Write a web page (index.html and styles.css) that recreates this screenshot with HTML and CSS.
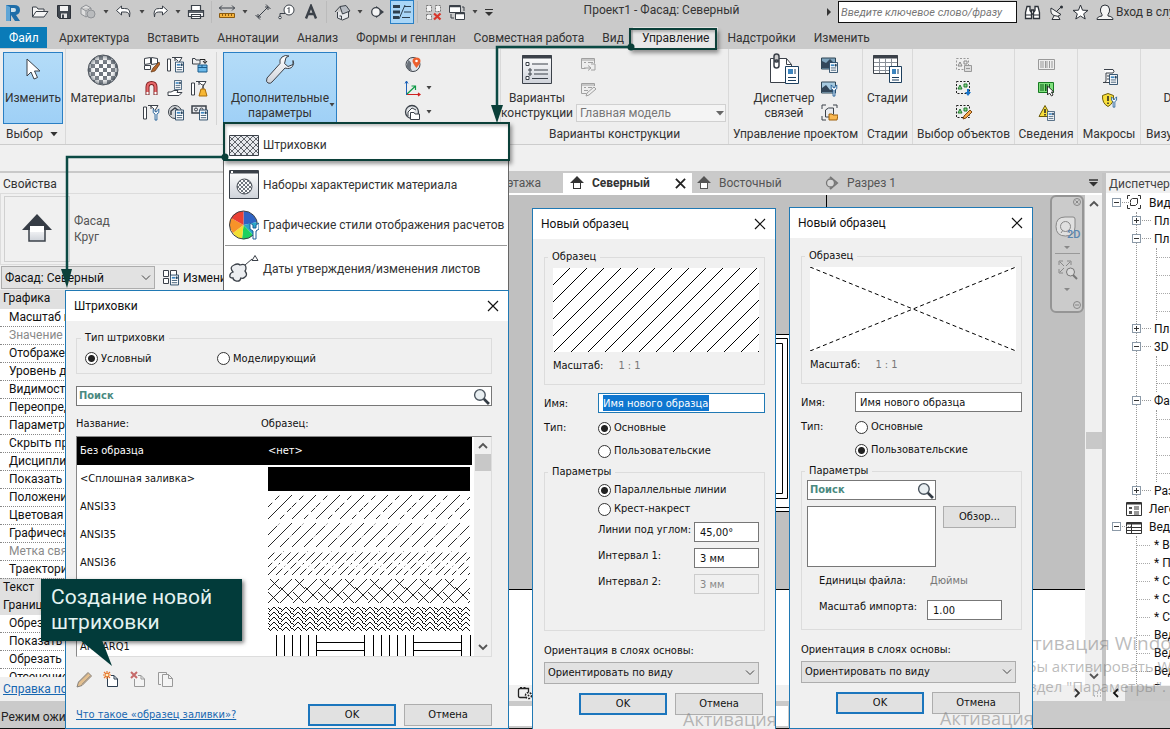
FILE: index.html
```html
<!DOCTYPE html>
<html lang="ru">
<head>
<meta charset="utf-8">
<title>Проект1 - Фасад: Северный</title>
<link rel="stylesheet" href="styles.css">
</head>
<body>
<svg class="defs" width="0" height="0" aria-hidden="true">
  <defs>
    <pattern id="checks" width="8" height="8" patternUnits="userSpaceOnUse"><rect width="8" height="8" fill="#fbfbfb"/><rect width="4" height="4" fill="#70767e"/><rect x="4" y="4" width="4" height="4" fill="#70767e"/></pattern>
    <pattern id="checks-s" width="4" height="4" patternUnits="userSpaceOnUse"><rect width="4" height="4" fill="#fbfbfb"/><rect width="2" height="2" fill="#70767e"/><rect x="2" y="2" width="2" height="2" fill="#70767e"/></pattern>
    <radialGradient id="ball"><stop offset=".5" stop-color="#fff" stop-opacity="0"/><stop offset="1" stop-color="#23303c" stop-opacity=".55"/></radialGradient>
    <linearGradient id="paper" x1="0" y1="0" x2="0" y2="1"><stop offset="0" stop-color="#fff"/><stop offset="1" stop-color="#cfd3da"/></linearGradient>
    <pattern id="mesh" width="6" height="6" patternUnits="userSpaceOnUse"><path d="M0 0l6 6M6 0L0 6" stroke="#3d4148" stroke-width=".8"/></pattern>
    <pattern id="diag" width="17" height="17" patternUnits="userSpaceOnUse"><path d="M-1 18L18-1" stroke="#000"/></pattern>
    <pattern id="h33" width="24" height="24" patternUnits="userSpaceOnUse"><path d="M0 24L24 0" stroke="#111" stroke-width=".9"/><path d="M12 24L24 12M0 12L12 0" stroke="#111" stroke-width=".9" stroke-dasharray="6 4"/></pattern>
    <pattern id="h35" width="24" height="24" patternUnits="userSpaceOnUse"><path d="M0 24L24 0" stroke="#111" stroke-width=".9"/><path d="M12 24L24 12M0 12L12 0" stroke="#111" stroke-width=".9" stroke-dasharray="13 2 1 2"/></pattern>
    <pattern id="h36" width="24" height="24" patternUnits="userSpaceOnUse"><path d="M0 24L24 0" stroke="#111" stroke-width=".9" stroke-dasharray="12 3 2 3"/><path d="M8 24L24 8M0 8L8 0" stroke="#111" stroke-width=".9" stroke-dasharray="9 3 1 3"/><path d="M16 24L24 16M0 16L16 0" stroke="#111" stroke-width=".9" stroke-dasharray="6 3 10 3"/></pattern>
    <pattern id="h37" width="25" height="24" patternUnits="userSpaceOnUse"><path d="M0 24L24 0M12 24L25 11M0 11L11 0M2 0L12 10M12 8L25 21M0 13L11 24" stroke="#111" stroke-width=".9" fill="none"/></pattern>
    <pattern id="herring" width="12" height="5" patternUnits="userSpaceOnUse"><path d="M0 6L6 0L12 6M0 1l3 3M9-1l3 3" stroke="#111" fill="none"/></pattern>
    <pattern id="parq" width="97" height="30" patternUnits="userSpaceOnUse"><path d="M8.500 0v30M16.500 0v30M24.500 0v30M32.500 0v30M40.500 0v30M48.500 0v30M96.500 0v30M48 7.500h49M48 15.500h49M48 23.500h49" stroke="#000" fill="none"/></pattern>
  </defs>
  <symbol id="card" viewBox="0 0 10 12"><path d="M.5.5h9v11h-9z" fill="#fff" stroke="#1d3f5e"/><path d="M2 2.500h4v2H2z" fill="#3d86c0"/><path d="M7 2.500h1v2H7zM2 6.500h6M2 9h6" stroke="#1d3f5e" stroke-width=".9"/></symbol>
  <symbol id="wrench-s" viewBox="0 0 8 14"><path d="M1 1v4l2 1.500V13h2V6.500L7 5V1L5 3v1H3V3z" fill="#fff" stroke="#1d5c96"/></symbol>
  <symbol id="home" viewBox="0 0 16 16"><path d="M8 1L1 8h3v6h8V8h3z" fill="currentColor"/><path d="M5 8h6v5H5z" fill="#fff"/></symbol>
  <symbol id="caret" viewBox="0 0 8 6"><path d="M1.500 1h5L4 4.500z" fill="#444"/></symbol>
  <symbol id="chev-d" viewBox="0 0 12 8"><path d="M2 2l4 4 4-4" fill="none" stroke="currentColor" stroke-width="1.800"/></symbol>
  <symbol id="close" viewBox="0 0 12 12"><path d="M1 1l10 10M11 1L1 11" fill="none" stroke="currentColor" stroke-width="1.200"/></symbol>
  <symbol id="lens" viewBox="0 0 16 16"><path d="M10 10l5 5" stroke="#333b44" stroke-width="2.600"/><circle cx="6.500" cy="6.500" r="5" fill="#e9eff2" stroke="#4a545e" stroke-width="1.300"/></symbol>
  <symbol id="duct" viewBox="0 0 16 16"><path d="M.5 3v12h3V3zM5 1.500h10l-3 5v2M8 2v3M11 5L7 1.500" fill="#fff" stroke="#3b4149"/></symbol>
</svg>

<div class="app">
  <header class="titlebar">
    <div class="logo"><svg width="18" height="18" viewBox="0 0 18 18"><path d="M2 1h8q6 0 6 5 0 4-4 5l4 6h-5l-4-6v6H2z" fill="#1f6da8"/><path d="M7 4h3q2 0 2 2t-2 2H7z" fill="#cfe0ea"/><path d="M2 1l4 2v14H2z" fill="#5fa5d6"/></svg></div>
    <nav class="quick" aria-label="Быстрый доступ">
      <button class="q" aria-label="Открыть"><svg width="18" height="16" viewBox="0 0 18 16"><path d="M1.500 13V3h4l1.500 2h6v2.500M1.500 13L5 7.500h12L13 13z" fill="#f4f4f4" stroke="#3b4149"/></svg></button>
      <button class="q" aria-label="Сохранить"><svg width="16" height="16" viewBox="0 0 16 16"><path d="M1.500 1.500h13v13h-11l-2-2z" fill="#40474f" stroke="#2c3138"/><path d="M4 2h8v5H4z" fill="#f3f3f3"/><path d="M5 9.500h6V14H5z" fill="#e3e3e3"/><path d="M6 10.500h2V14H6z" fill="#40474f"/></svg></button>
      <button class="q" aria-label="Синхронизировать"><svg width="18" height="18" viewBox="0 0 18 18"><path d="M2 5l5-3 5 3v6l-5 3-5-3zM2 5l5 3 5-3M7 8v6" fill="#dedede" stroke="#8f9296"/><circle cx="12" cy="11" r="4" fill="#b9bbbd" stroke="#8f9296"/></svg></button>
      <button class="dd" aria-label="Ещё"><svg width="8" height="6"><use href="#caret"/></svg></button>
      <button class="q" aria-label="Отменить"><svg width="18" height="14" viewBox="0 0 18 14"><path d="M6.500 1L1.500 5.500l5 4.500V7h4q4 0 4 5 2-9-5-8.500h-3z" fill="#fff" stroke="#3b4149"/></svg></button>
      <button class="dd" aria-label="Ещё"><svg width="8" height="6"><use href="#caret"/></svg></button>
      <button class="q" aria-label="Вернуть"><svg width="18" height="14" viewBox="0 0 18 14"><path d="M11.500 1l5 4.500-5 4.500V7h-4q-4 0-4 5-2-9 5-8.500h3z" fill="#fff" stroke="#3b4149"/></svg></button>
      <button class="dd" aria-label="Ещё"><svg width="8" height="6"><use href="#caret"/></svg></button>
      <button class="q" aria-label="Печать"><svg width="18" height="16" viewBox="0 0 18 16"><path d="M4.500 6V1.500h9V6M1.500 6.500h15v6h-15zM4.500 10.500h9v4h-9z" fill="#fff" stroke="#3b4149" stroke-width="1.200"/><path d="M2 7h14v2H2z" fill="#5d636b"/></svg></button>
      <i class="qsep"></i>
      <button class="q" aria-label="Измерить"><svg width="18" height="16" viewBox="0 0 18 16"><path d="M1 4h16M4 1.500L1.500 4 4 6.500M14 1.500L16.500 4 14 6.500" fill="none" stroke="#3b4149"/><path d="M1.500 9.500h15v4h-15z" fill="#f5b33c" stroke="#8a5a10"/><path d="M4.500 10v2M7.500 10v2M10.500 10v2M13.500 10v2" stroke="#8a5a10"/></svg></button>
      <button class="dd" aria-label="Ещё"><svg width="8" height="6"><use href="#caret"/></svg></button>
      <button class="q" aria-label="Размер"><svg width="18" height="18" viewBox="0 0 18 18"><path d="M4 14L14 4M1.500 12l4.500 4.500M12 1.500L16.500 6M4 11v3h3M11 4h3v3" fill="none" stroke="#3b4149"/></svg></button>
      <button class="q" aria-label="Марка"><svg width="18" height="16" viewBox="0 0 18 16"><path d="M2 14v-4.500h5" fill="none" stroke="#3b4149"/><circle cx="2" cy="13.500" r="1.300" fill="#fff" stroke="#3b4149"/><circle cx="11" cy="6" r="5" fill="#fff" stroke="#3b4149"/><path d="M9.500 5L11 3.500V9" fill="none" stroke="#3b4149"/></svg></button>
      <button class="q" aria-label="Текст"><svg width="14" height="16" viewBox="0 0 14 16"><path d="M2 14.500L7 2l5 12.500M4 10h6" fill="none" stroke="#3b4149" stroke-width="2.400"/></svg></button>
      <i class="qsep"></i>
      <button class="q" aria-label="3D вид"><svg width="17" height="17" viewBox="0 0 17 17"><path d="M3.500 8v6l5 2 6-2.500V7" fill="#e7e9ec" stroke="#3b4149"/><path d="M1 8l5-5.500 6-1L16 7l-7.500 3L6 2.500" fill="#b7bcc3" stroke="#3b4149"/><path d="M5.500 12h2v3" fill="none" stroke="#3b4149"/></svg></button>
      <button class="dd" aria-label="Ещё"><svg width="8" height="6"><use href="#caret"/></svg></button>
      <button class="q" aria-label="Разрез"><svg width="16" height="16" viewBox="0 0 16 16"><path d="M6 2l8 6-8 6z" fill="#3b4149"/><circle cx="6" cy="8" r="4.300" fill="#f4f4f4" stroke="#3b4149" stroke-width="1.300"/></svg></button>
      <button class="q on" aria-label="Тонкие линии"><svg width="20" height="18" viewBox="0 0 20 18"><path d="M1 3.500h7M1 9h7M1 14.500h6" stroke="#2c3e4d" stroke-width="3"/><path d="M13 2L7 16M12 3.500h7M12 9h7M10 14.500h8" stroke="#2c3e4d"/></svg></button>
      <i class="qsep"></i>
      <button class="q" aria-label="Закрыть неактивные"><svg width="17" height="17" viewBox="0 0 17 17"><path d="M1.500 1.500h5v6h-5zM10.500 1.500h5v6h-5zM1.500 10.500h5v5h-5z" fill="#f4f4f4" stroke="#777" stroke-dasharray="2 1"/><path d="M9 9.500l6.500 6M15.500 9.500L9 15.500" stroke="#d8362a" stroke-width="2.300"/></svg></button>
      <button class="q" aria-label="Переключить окна"><svg width="18" height="17" viewBox="0 0 18 17"><path d="M1.500 1.500h11v7h-11zM7.500 8.500h9v7h-9z" fill="#fff" stroke="#3b4149"/><path d="M2 2.500h10M8 9.500h8" stroke="#3b4149" stroke-width="1.500"/><path d="M3 10v4h3M16 7V3h-2" fill="none" stroke="#3b4149"/></svg></button>
      <button class="dd" aria-label="Ещё"><svg width="8" height="6"><use href="#caret"/></svg></button>
      <button class="dd wide" aria-label="Настроить"><svg width="10" height="9" viewBox="0 0 10 9"><path d="M1 1.500h8" stroke="#333"/><path d="M1 4h8L5 8z" fill="#333"/></svg></button>
    </nav>
    <h1 class="doc-title">Проект1 - Фасад: Северный</h1>
    <div class="account">
      <svg width="6" height="8" viewBox="0 0 6 8"><path d="M1 0l4 4-4 4z" fill="#333"/></svg>
      <input class="help-search" type="text" placeholder="Введите ключевое слово/фразу" aria-label="Поиск в справке">
      <svg width="17" height="16" viewBox="0 0 17 16"><path d="M3 2.500h3v4l1.500 2v6h-6v-6zM11 2.500h3l1.500 6v6h-6v-6l1.500-2zM7.500 6h2v4h-2z" fill="#fff" stroke="#2c3138" stroke-width="1.300"/><path d="M2 11h5M10 11h5" stroke="#2c3138"/></svg>
      <svg width="17" height="17" viewBox="0 0 17 17"><path d="M3 4q-1 6 3 7.500 4 2 7-1zM8 8l5-5M6 12l-2 3.500h8L10 12" fill="#f2f2f2" stroke="#2c3138"/><circle cx="13.500" cy="3" r="1.500" fill="#2c3138"/></svg>
      <svg width="17" height="16" viewBox="0 0 17 16"><path d="M8.500 1l2 5.200 5.500.2-4.300 3.400 1.500 5.200-4.700-3-4.700 3 1.500-5.200L1 6.400l5.500-.2z" fill="#fff" stroke="#2c3138"/></svg>
      <svg width="18" height="17" viewBox="0 0 18 17"><path d="M1 15.500q0-3 5-3.500v-1.500Q4 8 4.500 5q.5-4 4.500-4t4.500 4q.5 3-1.500 5.500V12q5 .5 5 3.500z" fill="#f4f4f4" stroke="#2c3138"/></svg>
      <a class="login" href="#">Вход в службы</a>
    </div>
  </header>

  <nav class="tabs" aria-label="Лента">
    <button class="tab file">Файл</button>
    <button class="tab">Архитектура</button>
    <button class="tab">Вставить</button>
    <button class="tab">Аннотации</button>
    <button class="tab">Анализ</button>
    <button class="tab">Формы и генплан</button>
    <button class="tab">Совместная работа</button>
    <button class="tab">Вид</button>
    <button class="tab current">Управление</button>
    <button class="tab">Надстройки</button>
    <button class="tab">Изменить</button>
  </nav>

  <section class="ribbon">
    <div class="panel p-select">
      <div class="panel-body"><button class="big lit"><svg width="32" height="34" viewBox="0 0 32 34"><path d="M10 6v17l4-4 3 7 3.500-1.500-3-6.500H23z" fill="#fff" stroke="#3b4149"/></svg><span>Изменить</span></button></div>
      <h2>Выбор <svg width="10" height="6" viewBox="0 0 8 5"><path d="M1 0h6L4 3.500z" fill="#333"/></svg></h2>
    </div>
    <div class="panel p-params">
      <div class="panel-body">
        <button class="big mat"><svg width="32" height="34" viewBox="0 0 32 34"><circle cx="16" cy="18" r="15" fill="url(#checks)"/><circle cx="16" cy="18" r="15" fill="url(#ball)" stroke="#565c64"/></svg><span>Материалы</span></button>
        <div class="small-grid">
          <button aria-label="Стили объектов"><svg width="17" height="17" viewBox="0 0 17 17"><path d="M1.500 2.500l6-1v6l-6 1zM8.500 1.500l6 1v5l-6 1zM1.500 9.500h6v4h-6z" fill="#fff" stroke="#3b4149"/><path d="M16 6l-6 6-2 4 4-1 5-7z" fill="#b5652a" stroke="#5c3313" stroke-width=".7"/></svg></button>
          <button aria-label="Параметры проекта"><svg width="17" height="17"><use href="#duct" width="16" height="16"/><use href="#card" x="8" y="5" width="9" height="12"/></svg></button>
          <button aria-label="Передача стандартов"><svg width="17" height="17" viewBox="0 0 17 17"><path d="M1.500 8V2.500H4l1 1.500h4V8z" fill="#eee" stroke="#3b4149"/><path d="M9 3.500h5V7M12 5l2 2.500L16 5" fill="none" stroke="#222"/><path d="M7 9h9v7H7z" fill="#6bb9ea" stroke="#1b5c8c"/><path d="M7 11.500h9M11 9v2" stroke="#1b5c8c"/></svg></button>
          <button aria-label="Привязки"><svg width="17" height="17" viewBox="0 0 17 17"><path d="M4.500 15V7q0-4 4-4t4 4v8" fill="none" stroke="#7c1d1f" stroke-width="4"/><path d="M4.500 12V7q0-4 4-4t4 4v5" fill="none" stroke="#e8686a" stroke-width="2.200"/><path d="M4.500 12v2.500M12.500 12v2.500" stroke="#fff" stroke-width="2.200"/></svg></button>
          <button aria-label="Общие параметры"><svg width="17" height="17" viewBox="0 0 17 17"><use href="#card" x="7" y="0" width="8" height="10"/><path d="M1 12h3l3-1.500h4l-1 2h5l-3 3H1z" fill="#fff" stroke="#3b4149"/></svg></button>
          <button aria-label="Удалить неиспользуемые"><svg width="17" height="17"><use href="#duct" width="16" height="16"/><path d="M12 4v5" stroke="#333"/><path d="M10 9h4l2 7H8z" fill="#f7b733" stroke="#a86c0a"/></svg></button>
          <button aria-label="Единицы проекта"><svg width="17" height="17"><use href="#duct" width="16" height="16"/><use href="#wrench-s" x="9" y="4" width="8" height="13"/></svg></button>
          <button aria-label="Электротехнические параметры"><svg width="17" height="17" viewBox="0 0 17 17"><circle cx="8" cy="8" r="6.500" fill="#d5d8db" stroke="#3b4149"/><path d="M4 11V7l4-3 4 3" fill="none" stroke="#3b4149" stroke-width="1.500"/><use href="#card" x="8" y="5" width="9" height="12"/></svg></button>
          <button aria-label="Диспетчер"><svg width="17" height="17" viewBox="0 0 17 17"><path d="M1 2h14v7H1z" fill="#e9ebee" stroke="#3b4149" stroke-width="1.500"/><circle cx="5" cy="5.500" r="1.500" fill="none" stroke="#3b4149"/><circle cx="10.500" cy="5.500" r="1.500" fill="none" stroke="#3b4149"/><use href="#card" x="8" y="5" width="9" height="12"/></svg></button>
        </div>
        <i class="rule"></i>
        <button class="big lit extra"><svg width="32" height="34" viewBox="0 0 32 34"><path d="M29 11.500l-5 2-3.500-3 1.500-6 3-1.500q-4-1.500-7 1t-2 6.500L3 25q-1.500 4 1 5t4-1l13-14q5 1.500 7.500-1.500 2-3 .5-6z" fill="url(#paper)" stroke="#3b4149"/></svg><span>Дополнительные<br>параметры</span><svg class="corner" width="8" height="6"><use href="#caret"/></svg></button>
        <div class="small-col">
          <button aria-label="Местоположение"><svg width="17" height="17" viewBox="0 0 17 17"><circle cx="8" cy="8.500" r="7" fill="#dfe3e8" stroke="#3b4149"/><path d="M3 4q4 2 3 5t1 6q-5-1-5.500-5z" fill="#6a717a"/><path d="M11.500 1.500q4 0 4 3.500 0 2-4 7-4-5-4-7 0-3.500 4-3.500z" fill="#ec5f2e"/><circle cx="11.500" cy="5" r="1.300" fill="#fff"/></svg></button><i></i>
          <button aria-label="Координаты"><svg width="18" height="17" viewBox="0 0 18 17"><path d="M2.500 15V1M1 3.500L2.500 1 4 3.500" fill="none" stroke="#1d62b8"/><path d="M3 14.500h13M14 13l2 1.500-2 1.500" fill="none" stroke="#cf2222" stroke-width="1.200"/><path d="M3 14L11 6.500M7.500 6h4v4" fill="none" stroke="#0f9a46" stroke-width="1.200"/></svg></button><svg width="8" height="6"><use href="#caret"/></svg>
          <button aria-label="Площадка"><svg width="18" height="17" viewBox="0 0 18 17"><circle cx="8" cy="8" r="6.500" fill="#e1e4e7" stroke="#3b4149" stroke-width="1.300"/><path d="M4 12V8l4-4 4 2M6.500 8.500H10l1 1.500h4.500v5.500h-9z" fill="#fff" stroke="#3b4149"/></svg></button><svg width="8" height="6"><use href="#caret"/></svg>
        </div>
      </div>
      <h2>Параметры</h2>
    </div>
    <div class="panel p-options">
      <div class="panel-body">
        <button class="big var"><svg width="32" height="34" viewBox="0 0 32 34"><path d="M1.500 3.500h29v28h-29z" fill="url(#paper)" stroke="#3b4149"/><path d="M1 5h30" stroke="#3b4149" stroke-width="3"/><path d="M5 10.500h3v3H5zM5 24.500h3v3H5zM8 17h2v2H8zM8 21h2v2H8z" fill="#fff" stroke="#3b4149"/><path d="M11 12h16M13 18h14M13 22h14M11 26.500h16" stroke="#3b4149"/></svg><span>Варианты<br>конструкции</span></button>
        <div class="options-col">
          <button disabled aria-label="Добавить в набор"><svg width="17" height="17" viewBox="0 0 17 17"><path d="M1.500 2.500h13v5M1.500 2.500v10h4M1.500 4h13M4 6.500h2M8 6.500h5M4 12h7M11 8h4v6h-4M8 9.500l3 2.500-3 2.500" fill="none" stroke="#a0a0a0"/></svg></button>
          <button disabled aria-label="Выбрать для изменения"><svg width="17" height="17" viewBox="0 0 17 17"><path d="M14.500 5V2.500h-13v10h5M1.500 4h13M4 6.500h2M8 6.500h4M4 9.500h4M6 15l1-3 7-6 2 2-7 6z" fill="none" stroke="#a0a0a0"/></svg></button>
          <select class="model" disabled aria-label="Вариант"><option>Главная модель</option></select>
        </div>
      </div>
      <h2>Варианты конструкции</h2>
    </div>
    <div class="panel p-project">
      <div class="panel-body">
        <button class="big links"><svg width="32" height="34" viewBox="0 0 32 34"><path d="M2.500 6.500h16l5 6v18h-21z" fill="#fff" stroke="#3b4149"/><path d="M18.500 6.500v6h5" fill="none" stroke="#3b4149"/><rect x="6" y="2" width="5" height="8" rx="2.500" fill="#ccc" stroke="#3b4149" stroke-width="1.500"/><rect x="6" y="8" width="5" height="8" rx="2.500" fill="none" stroke="#3b4149" stroke-width="1.500"/><path d="M17.500 14.500h13v17h-13z" fill="#fff" stroke="#1d3f5e"/><path d="M20 17h5v5h-5z" fill="#3d86c0"/><path d="M27 17v5M20 25.500h8M20 28.500h8" stroke="#1d3f5e"/></svg><span>Диспетчер<br>связей</span></button>
        <div class="triple">
          <button aria-label="Растровое изображение"><svg width="17" height="17" viewBox="0 0 17 17"><path d="M.5 2h14v11H.5z" fill="#7fa4bd" stroke="#2f4656"/><path d="M1 12V5l4 2 4-4 5 5v4z" fill="#33475a"/><use href="#card" x="8" y="6" width="9" height="11"/></svg></button>
          <button aria-label="Наклейки"><svg width="17" height="17" viewBox="0 0 17 17"><path d="M.5 2h14v11H.5z" fill="#a6cae0" stroke="#2f4656"/><path d="M1 12V8l4-3 4 5 5-2v4z" fill="#33475a"/><use href="#wrench-s" x="9" y="4" width="8" height="13"/></svg></button>
          <button aria-label="Начальный вид"><svg width="17" height="17" viewBox="0 0 17 17"><path d="M1 5V1h4M12 1h4v3M1 12v4h4" fill="none" stroke="#3b4149"/><path d="M4.500 6l3-2h5v6l-3 3h-5z" fill="#e9ebee" stroke="#3b4149"/><path d="M8 10h3l1 1h5l-1 5H8z" fill="#f9b851" stroke="#a0620e"/></svg></button>
        </div>
      </div>
      <h2>Управление проектом</h2>
    </div>
    <div class="panel p-phases">
      <div class="panel-body"><button class="big"><svg width="32" height="34" viewBox="0 0 32 34"><path d="M1.500 3.500h24v18h-24z" fill="#fff" stroke="#3b4149"/><path d="M1 5h25" stroke="#3b4149" stroke-width="3"/><path d="M2 10.500h23M2 14.500h23M2 18.500h23M7.500 6v15M13.500 6v15M19.500 6v15" stroke="#8a9098"/><path d="M17.500 14.500h12v16h-12z" fill="#fff" stroke="#1d3f5e"/><path d="M20 17h4v5h-4z" fill="#3d86c0"/><path d="M26 17v5M20 25.500h7M20 28h7" stroke="#1d3f5e"/></svg><span>Стадии</span></button></div>
      <h2>Стадии</h2>
    </div>
    <div class="panel p-sel">
      <div class="panel-body"><div class="triple">
        <button disabled aria-label="Сохранить набор"><svg width="17" height="17" viewBox="0 0 17 17"><path d="M1.500 2.500h12v11h-12z" fill="none" stroke="#999" stroke-dasharray="2 1.500"/><path d="M3 10l2-4 2 4zM9 5h3v3H9z" fill="none" stroke="#888"/><path d="M9.500 9.500h7v6h-7zM11 12.500h4" fill="#ddd" stroke="#999"/></svg></button>
        <button aria-label="Загрузить набор"><svg width="17" height="17" viewBox="0 0 17 17"><path d="M1.500 1.500h13v12h-13z" fill="none" stroke="#222" stroke-dasharray="2 1.500"/><path d="M3 9l2-4 2 4zM9 4h3v3H9z" fill="#8fd18a" stroke="#1c7a2b"/><path d="M12 9h2v3h2l-3 4-3-4h2z" fill="#1773c9"/></svg></button>
        <button aria-label="Изменить набор"><svg width="17" height="17" viewBox="0 0 17 17"><path d="M1.500 1.500h13v12h-13z" fill="none" stroke="#222" stroke-dasharray="2 1.500"/><path d="M3 9l2-4 2 4zM9 4h3v3H9z" fill="#8fd18a" stroke="#1c7a2b"/><path d="M8 15l1-3 6-6 2 2-6 6z" fill="#f5a94a" stroke="#7c4611"/></svg></button>
      </div></div>
      <h2>Выбор объектов</h2>
    </div>
    <div class="panel p-info">
      <div class="panel-body"><div class="triple">
        <button disabled aria-label="Коды элементов"><svg width="17" height="17" viewBox="0 0 17 17"><path d="M.5 3.500h16v10H.5zM3 5v7M5 5v7M7.500 5v7M9 5v7M11.500 5v7M14 5v7" fill="#eee" stroke="#999"/></svg></button>
        <button aria-label="Выбрать по коду"><svg width="17" height="17" viewBox="0 0 17 17"><path d="M.5 2.500h15v10H.5z" fill="#7fe07c" stroke="#177a22"/><path d="M3 4v7M5 4v7M7.500 4v7M9 4v7M11.500 4v7" stroke="#0d5c19"/><path d="M9.500 6v9l2-2 2 3 1.500-1-1.500-3h2.500z" fill="#fff" stroke="#333"/></svg></button>
        <button aria-label="Предупреждения"><svg width="17" height="17" viewBox="0 0 17 17"><path d="M7 1.500l6 11H1z" fill="#f8df3c" stroke="#6d5c08"/><path d="M7 5v4M7 10v1.500" stroke="#222" stroke-width="1.500"/><use href="#card" x="9" y="7" width="8" height="10"/></svg></button>
      </div></div>
      <h2>Сведения</h2>
    </div>
    <div class="panel p-macro">
      <div class="panel-body"><div class="triple">
        <button aria-label="Диспетчер макросов"><svg width="17" height="17" viewBox="0 0 17 17"><path d="M3 1.500h9q2 2 0 3.500H5v8q0 2-3 1.500h8" fill="#fff" stroke="#3b4149"/><path d="M6 8h4M6 11h3" stroke="#3b4149"/><use href="#card" x="8" y="6" width="9" height="11"/></svg></button>
        <button aria-label="Безопасность макросов"><svg width="17" height="17" viewBox="0 0 17 17"><path d="M7 1.500l5.500 2q.5 8-5.500 11Q1 11.500 1.500 3.500z" fill="#f8df3c" stroke="#6d5c08"/><path d="M7 4v5M7 10.500V12" stroke="#222" stroke-width="1.500"/><use href="#wrench-s" x="9" y="4" width="8" height="12"/></svg></button>
      </div></div>
      <h2>Макросы</h2>
    </div>
    <div class="panel p-visual">
      <div class="panel-body"><button class="big"><svg width="32" height="34"></svg><span>Dynamo</span></button></div>
      <h2>Визуальное программирование</h2>
    </div>
  </section>
  <div class="options-bar"></div>

  <main class="work">
    <aside class="props">
      <h2 class="pane-title">Свойства</h2>
      <div class="type">
        <div class="type-pic"><svg width="32" height="32" viewBox="0 0 32 32"><path d="M8 14h16v14H8z" fill="url(#paper)" stroke="#3b4149" stroke-width="1.500"/><path d="M16 1l15 16H1z" fill="#363c45"/><path d="M9 13h14v6H9z" fill="#fff"/></svg></div>
        <p>Фасад<br>Круг</p>
      </div>
      <div class="instance">
        <select aria-label="Элемент"><option>Фасад: Северный</option></select>
        <button class="edit-type"><svg width="17" height="17" viewBox="0 0 17 17"><path d="M1.500 1.500h5v6h-5zM8.500 1.500h6v5h-6zM1.500 9.500h5v5h-5z" fill="#fff" stroke="#3b4149"/><use href="#card" x="8" y="5" width="9" height="12"/></svg>Изменить тип</button>
      </div>
      <div class="grid-scroll">
        <table class="grid">
          <tr class="sec"><th>Графика</th></tr>
          <tr><td>Масштаб вида</td></tr>
          <tr class="off"><td>Значение масштаба</td></tr>
          <tr><td>Отображение модели</td></tr>
          <tr><td>Уровень детализации</td></tr>
          <tr><td>Видимость частей</td></tr>
          <tr><td>Переопределения</td></tr>
          <tr><td>Параметры отображения</td></tr>
          <tr><td>Скрыть при масштабе</td></tr>
          <tr><td>Дисциплина</td></tr>
          <tr><td>Показать невидимые</td></tr>
          <tr><td>Положение цветовой</td></tr>
          <tr><td>Цветовая схема</td></tr>
          <tr><td>Графический стиль</td></tr>
          <tr class="off"><td>Метка связанного</td></tr>
          <tr><td>Траектория солнца</td></tr>
          <tr class="sec"><th>Текст</th></tr>
          <tr class="sec"><th>Границы</th></tr>
          <tr><td>Обрезать вид</td></tr>
          <tr><td>Показать границу</td></tr>
          <tr><td>Обрезать аннотации</td></tr>
          <tr><td>Отсечение</td></tr>
        </table>
      </div>
      <a class="help" href="#">Справка по свойствам</a>
    </aside>

    <section class="view">
      <nav class="view-tabs">
        <button class="vt first">План этажа</button>
        <button class="vt active"><svg width="16" height="16"><use href="#home"/></svg><span>Северный</span><svg class="x" width="11" height="11" viewBox="0 0 12 12"><path d="M1 1l10 10M11 1L1 11" stroke="#222" stroke-width="2"/></svg></button>
        <button class="vt east"><svg width="16" height="16"><use href="#home"/></svg><span>Восточный</span></button>
        <button class="vt cut"><svg width="16" height="16" viewBox="0 0 16 16"><path d="M6 2l7 6-7 6" fill="none" stroke="#777" stroke-width="2"/><circle cx="6.500" cy="8" r="4" fill="#d6d6d6" stroke="#777" stroke-width="1.300"/></svg><span>Разрез 1</span></button>
        <button class="more" aria-label="Список видов"><svg width="9" height="8" viewBox="0 0 9 8"><path d="M0 1h9" stroke="#333" stroke-width="1.500"/><path d="M0 3h9L4.500 7.500z" fill="#333"/></svg></button>
      </nav>
      <div class="stage">
        <div class="canvas">
          <div class="sky">
            <svg class="facade" width="60" height="180" viewBox="0 0 60 180"><path d="M0 0h60v178H0z" fill="#fff"/><path d="M0 .5h60M0 4.500h33.500v160H0M0 9.500h28.500v150H0M0 173.500h60M0 177.500h60" fill="none" stroke="#000"/></svg>
            <i class="axis"></i>
          </div>
          <div class="ground"></div>
          <div class="navbar">
            <svg width="34" height="118" viewBox="0 0 34 118"><rect x="1" y="1" width="32" height="116" rx="5" fill="#cbcbcb" stroke="#959595" stroke-width="2"/><circle cx="27" cy="7" r="3.500" fill="none" stroke="#888"/><path d="M25.500 5.500l3 3M28.500 5.500l-3 3" stroke="#888"/><path d="M15 22h8q2 0 2 2v8q0 9-9.500 9T6 31.500 15 22z" fill="#e0e0e0" stroke="#888"/><circle cx="15.500" cy="31.500" r="5" fill="none" stroke="#888"/><path d="M11 38l2-3M20 38l-2-3" stroke="#888"/><path d="M14 51h6l-3 3zM14 93h6l-3 3z" fill="#888"/><path d="M5 58.500h25" stroke="#999"/><path d="M10 67l4 4M20 67l-4 4M10 77l4-4M9 70v-4h4M17 66h4v4M9 74v4h4" fill="none" stroke="#888"/><circle cx="20.500" cy="77" r="4" fill="#d9d9d9" stroke="#777"/><path d="M23 80l4 4" stroke="#777" stroke-width="2"/><circle cx="27" cy="110" r="3.500" fill="none" stroke="#888"/><path d="M25 110h4" stroke="#888"/></svg>
            <b>2D</b>
          </div>
        </div>
        <div class="vscroll"><svg class="up" width="12" height="8"><use href="#chev-d"/></svg><i></i><svg width="12" height="8"><use href="#chev-d"/></svg></div>
      </div>
      <div class="viewbar"><svg class="cam" width="16" height="14" viewBox="0 0 16 14"><path d="M9 11.500H3q-1.500 0-1.500-1.500V4q0-1.500 1.500-1.500h8.500V6" fill="none" stroke="#222" stroke-width="1.300"/><path d="M3 1.500h7" stroke="#222" stroke-dasharray="2 1.500"/><circle cx="11.500" cy="9.500" r="3" fill="#fff" stroke="#222" stroke-width="1.500" stroke-dasharray="2 1"/><circle cx="11.500" cy="9.500" r="1" fill="#222"/></svg><svg class="right" width="12" height="8"><use href="#chev-d"/></svg><svg class="grip" width="9" height="9" viewBox="0 0 9 9"><path d="M7 1h1M4 4h1M7 4h1M1 7h1M4 7h1M7 7h1" stroke="#aaa" stroke-width="1.500"/></svg></div>
    </section>

    <aside class="browser">
      <h2 class="pane-title">Диспетчер проекта</h2>
      <ul class="tree">
        <li><i class="ex"></i><svg class="ti" width="16" height="16" viewBox="0 0 16 16"><path d="M1.500 5V1.500H4M12 1.500h2.500V5M1.500 11v3.500H4M12 14.500h2.500V11" fill="none" stroke="#333"/><path d="M4.500 6l2-1.500h5v5l-2 2h-5z" fill="#fff" stroke="#333"/></svg>Виды (все)
          <ul>
            <li><i class="ex plus"></i>Планы несущих</li>
            <li><i class="ex"></i>Планы этажей<ul class="leaf"><li></li><li></li><li></li><li></li></ul></li>
            <li><i class="ex plus"></i>Планы потолков</li>
            <li><i class="ex"></i>3D виды<ul class="leaf"><li></li><li></li></ul></li>
            <li><i class="ex"></i>Фасады<ul class="leaf"><li></li><li></li><li></li><li></li></ul></li>
            <li><i class="ex plus"></i>Разрезы</li>
          </ul>
        </li>
        <li><i class="ex none"></i><svg class="ti" width="16" height="14" viewBox="0 0 16 14"><path d="M.5.500h15v13H.5z" fill="#fff" stroke="#333"/><path d="M1 1.500h14" stroke="#333" stroke-width="2"/><path d="M3 5h3v2H3zM3 9h3v3H3z" fill="#555"/><path d="M8 5h5M8 7h5M8 10h5M8 12h5" stroke="#333"/></svg>Легенды</li>
        <li><i class="ex"></i><svg class="ti" width="16" height="12" viewBox="0 0 16 12"><path d="M.5.500h15v11H.5z" fill="#fff" stroke="#333"/><path d="M1 1.500h14" stroke="#333" stroke-width="2"/><path d="M1 5.500h14M1 8.500h14M5.500 2v10" stroke="#333"/></svg>Ведомости
          <ul class="plain"><li>* Ведомость</li><li>* Помещения</li><li>* Спецификация</li><li>* Спецификация</li><li>* Спецификация</li><li>Ведомость</li><li>Ведомость</li><li>Ведомость</li><li>Ведомость</li></ul>
        </li>
      </ul>
      <div class="hscroll"><svg class="left" width="12" height="8"><use href="#chev-d"/></svg><i></i></div>
    </aside>
  </main>

  <footer class="status"><span>Режим ожидания</span><div class="worksets"></div></footer>
</div>

<div class="watermark"><p class="wm-title">Активация Windows</p><p class="wm-go">Чтобы активировать Windows,</p><p class="wm-where">перейдите в раздел "Параметры".</p></div>

<div class="menu" role="menu">
  <button class="item picked" role="menuitem"><svg width="30" height="30" viewBox="0 0 30 30"><path d="M.5 5.500h29v20H.5z" fill="#e8eaee" stroke="#3b4149"/><path d="M1 6h28v19H1z" fill="url(#mesh)"/></svg>Штриховки</button>
  <button class="item" role="menuitem"><svg width="30" height="30" viewBox="0 0 30 30"><path d="M.5.500h29v28H.5z" fill="url(#paper)" stroke="#3b4149"/><path d="M1 2h28" stroke="#3b4149" stroke-width="3"/><path d="M2 1h2v2H2z" fill="#fff"/><circle cx="15.500" cy="16.500" r="7.500" fill="url(#checks-s)" stroke="#4a5058"/></svg>Наборы характеристик материала</button>
  <button class="item" role="menuitem"><svg width="30" height="30" viewBox="0 0 30 30"><path d="M14.500 15V1A14 14 0 0 1 28 12z" fill="#2f63c4"/><path d="M14.500 15L28 12a14 14 0 0 1-4 13z" fill="#2aa7c9"/><path d="M14.500 15L24 25q-5 5-11 4z" fill="#1fd05f"/><path d="M14.500 15L13 29q-6-1-9-6z" fill="#f2df32"/><path d="M14.500 15L4 23Q-2 15 2 8z" fill="#f79329"/><path d="M14.500 15L2 8q4-7 12.500-7z" fill="#ea3f33"/><circle cx="14.500" cy="15" r="14" fill="none" stroke="#3b4149"/><path d="M21 13v6l3 2v8h3v-8l3-2v-6l-3 2v3h-3v-3z" fill="#fff" stroke="#1d5c96"/></svg>Графические стили отображения расчетов</button>
  <button class="item sep" role="menuitem"><svg width="30" height="30" viewBox="0 0 30 30"><path d="M4 18q-4-5 1-7 4-2 6 0 6-2 6 3 0 2-1 3 3 4 0 6-2 2-4 1-1 4-5 3-3-1-3-3-4 0-3-3 0-2 3-3z" fill="#eceef1" stroke="#3b4149" stroke-width="1.300"/><path d="M16 11l7-6M26 1.500l3 5h-6z" fill="#fff" stroke="#3b4149"/></svg>Даты утверждения/изменения листов</button>
</div>

<section class="dialog hatch-list" role="dialog" aria-label="Штриховки">
  <header><h2>Штриховки</h2><button class="x" aria-label="Закрыть"><svg width="12" height="12"><use href="#close"/></svg></button></header>
  <div class="dlg-body">
    <fieldset class="kind"><legend>Тип штриховки</legend>
      <label><input type="radio" name="kind" checked>Условный</label>
      <label><input type="radio" name="kind">Моделирующий</label>
    </fieldset>
    <div class="search"><input type="text" placeholder="Поиск" aria-label="Поиск"><svg width="17" height="17"><use href="#lens"/></svg></div>
    <div class="cols"><span>Название:</span><span>Образец:</span></div>
    <div class="list">
      <table>
        <tr class="sel"><td>Без образца</td><td>&lt;нет&gt;</td></tr>
        <tr><td>&lt;Сплошная заливка&gt;</td><td><svg width="202" height="24"><rect width="202" height="24"/></svg></td></tr>
        <tr><td>ANSI33</td><td><svg width="202" height="24"><rect width="202" height="24" fill="url(#h33)"/></svg></td></tr>
        <tr><td>ANSI35</td><td><svg width="202" height="24"><rect width="202" height="24" fill="url(#h35)"/></svg></td></tr>
        <tr><td>ANSI36</td><td><svg width="202" height="24"><rect width="202" height="24" fill="url(#h36)"/></svg></td></tr>
        <tr><td>ANSI37</td><td><svg width="202" height="24"><rect width="202" height="24" fill="url(#h37)"/></svg></td></tr>
        <tr><td>AR-HBONE</td><td><svg width="202" height="24"><rect width="202" height="24" fill="url(#herring)"/></svg></td></tr>
        <tr><td>AR-PARQ1</td><td><svg width="203" height="24"><rect width="203" height="24" fill="url(#parq)"/></svg></td></tr>
      </table>
      <div class="vscroll"><svg class="up" width="12" height="8"><use href="#chev-d"/></svg><i></i><svg width="12" height="8"><use href="#chev-d"/></svg></div>
    </div>
    <div class="tools">
      <button aria-label="Изменить"><svg width="17" height="17" viewBox="0 0 17 17"><path d="M1 16l1.500-5L12 1.500l3.500 3.500L6 14.500z" fill="#e3bf8f" stroke="#87817a"/><path d="M3 11l9-8.500M5.500 13.500l9-9" stroke="#a5998a"/></svg></button>
      <button aria-label="Создать"><svg width="17" height="17" viewBox="0 0 17 17"><path d="M4.500 5.500v10h10V8l-3.500-3.500H8M11 4.500V8h3.500" fill="#fff" stroke="#2c3e50"/><path d="M4 0v8M0 4h8M1 1l6 6M7 1L1 7" stroke="#e8762c" stroke-width="1.200"/><circle cx="4" cy="4" r="1.300" fill="#fff0c0"/></svg></button>
      <button aria-label="Удалить"><svg width="17" height="17" viewBox="0 0 17 17"><path d="M4.500 8v7.500h10V8l-3.500-3.500H8M11 4.500V8h3.500" fill="#f4f4f4" stroke="#999"/><path d="M1 1l6 6M7 1L1 7" stroke="#c66a6a" stroke-width="2"/></svg></button>
      <button aria-label="Копировать"><svg width="17" height="17" viewBox="0 0 17 17"><path d="M4 13.500H1.500v-12h8V3M5.500 3.500h6l4 4v8h-10zM11.500 3.500v4h4" fill="#f4f4f4" stroke="#999"/></svg></button>
    </div>
    <div class="foot"><a href="#">Что такое «образец заливки»?</a><button class="btn ok">OK</button><button class="btn">Отмена</button></div>
  </div>
</section>

<section class="dialog pattern basic" role="dialog" aria-label="Новый образец">
  <header><h2>Новый образец</h2><button class="x" aria-label="Закрыть"><svg width="12" height="12"><use href="#close"/></svg></button></header>
  <div class="dlg-body">
    <fieldset class="sample"><legend>Образец</legend>
      <svg class="pic" width="206" height="84"><rect width="206" height="84" fill="#fff"/><rect width="206" height="84" fill="url(#diag)"/></svg>
      <p>Масштаб:<span>1 : 1</span></p>
    </fieldset>
    <div class="form">
      <label for="n1">Имя:</label><div class="box focus"><mark><input id="n1" type="text" value="Имя нового образца"></mark></div>
      <span>Тип:</span><div class="radios"><label><input type="radio" name="t1" checked>Основные</label><label><input type="radio" name="t1">Пользовательские</label></div>
    </div>
    <fieldset class="params"><legend>Параметры</legend>
      <div class="indent radios tight"><label><input type="radio" name="l1" checked>Параллельные линии</label><label><input type="radio" name="l1">Крест-накрест</label></div>
      <div class="indent pair"><label for="a1">Линии под углом:</label><input class="txt" id="a1" type="text" value="45,00°"></div>
      <div class="indent pair"><label for="i1">Интервал 1:</label><input class="txt" id="i1" type="text" value="3 мм"></div>
      <div class="indent pair"><label for="i2">Интервал 2:</label><input class="txt" id="i2" type="text" value="3 мм" disabled></div>
    </fieldset>
    <label class="orient-label" for="o1">Ориентация в слоях основы:</label>
    <select class="orient" id="o1"><option>Ориентировать по виду</option></select>
    <div class="foot"><button class="btn ok">OK</button><button class="btn">Отмена</button></div>
  </div>
  <span class="wm-part">Активация</span>
</section>

<section class="dialog pattern custom" role="dialog" aria-label="Новый образец">
  <header><h2>Новый образец</h2><button class="x" aria-label="Закрыть"><svg width="12" height="12"><use href="#close"/></svg></button></header>
  <div class="dlg-body">
    <fieldset class="sample"><legend>Образец</legend>
      <svg class="pic" width="206" height="84"><rect width="206" height="84" fill="#fff"/><path d="M0 0l206 84M0 84L206 0" stroke="#000" stroke-dasharray="4 3"/></svg>
      <p>Масштаб:<span>1 : 1</span></p>
    </fieldset>
    <div class="form">
      <label for="n2">Имя:</label><div class="box"><input id="n2" type="text" value="Имя нового образца"></div>
      <span>Тип:</span><div class="radios"><label><input type="radio" name="t2">Основные</label><label><input type="radio" name="t2" checked>Пользовательские</label></div>
    </div>
    <fieldset class="params"><legend>Параметры</legend>
      <div class="import-grid">
        <div class="search"><input type="text" placeholder="Поиск" aria-label="Поиск"><svg width="17" height="17"><use href="#lens"/></svg></div>
        <div class="files"></div>
        <button class="btn browse">Обзор...</button>
      </div>
      <p class="units">Единицы файла:<span>Дюймы</span></p>
      <div class="scale"><label for="s2">Масштаб импорта:</label><input class="txt" id="s2" type="text" value="1.00"></div>
    </fieldset>
    <label class="orient-label" for="o2">Ориентация в слоях основы:</label>
    <select class="orient" id="o2"><option>Ориентировать по виду</option></select>
    <div class="foot"><button class="btn ok">OK</button><button class="btn">Отмена</button></div>
  </div>
  <span class="wm-part">Активация</span>
</section>

<div class="ring ring-tab"></div>
<div class="ring ring-item"></div>
<svg class="guides" width="720" height="300" viewBox="0 0 720 300" aria-hidden="true"><g fill="none" stroke="#0b4a44" stroke-width="2.500"><path d="M631 47H497V106"/><path d="M225 157H67V270"/></g><g fill="#0b4039"><path d="M491 105h12l-6 18zM61 269h11l-5 19z"/><circle cx="631" cy="47" r="3.500"/><circle cx="225" cy="157" r="3.500"/></g></svg>
<div class="callout">Создание новой<br>штриховки<svg width="34" height="28" viewBox="0 0 34 28"><path d="M0 0h22l10 26z" fill="#023b3a"/></svg></div>
</body>
</html>
```
FILE: styles.css
```css
* { box-sizing: border-box; }
body {
  margin: 0;
  overflow: hidden;
  font: 12px/16px Roboto, "Noto Sans", sans-serif;
  color: #333;
}
button, input, select { font: inherit; color: inherit; margin: 0; }
button { background: none; border: 0; padding: 0; }
h1, h2, p, ul, fieldset { margin: 0; padding: 0; font-weight: 400; font-size: inherit; }
ul { list-style: none; }
a { color: #1767b1; }
svg { display: block; flex: none; }
.defs { position: absolute; }

.app { height: 100vh; display: flex; flex-direction: column; background: #f0f0f0; border-bottom: 1px solid #111; }

/* title bar */
.titlebar { display: flex; height: 27px; background: #cacaca; flex: none; }
.logo { width: 28px; padding: 4px 0 0 4px; }
.quick { display: flex; align-items: center; height: 24px; flex: none; }
.q { width: 24px; height: 24px; display: grid; place-items: center; }
.q.on { background: #a9d6f7; border: 1px solid #2a7fc4; }
.dd { width: 12px; height: 24px; display: grid; place-items: center; }
.dd.wide { width: 16px; }
.qsep { width: 7px; height: 22px; background: linear-gradient(#bbb, #bbb) center / 1px 100% no-repeat; }
.doc-title { flex: 1; text-align: center; line-height: 20px; white-space: nowrap; }
.account { display: flex; align-items: center; gap: 7px; height: 24px; width: 344px; flex: none; white-space: nowrap; overflow: hidden; }
.account > svg:first-child { margin-right: -1px; }
.help-search { width: 179px; flex: none; height: 22px; border: 1px solid #111; background: #fff; padding: 0 2px; font-size: 11px; font-style: italic; }
.help-search::placeholder { color: #777; }
.login { color: #333; text-decoration: none; margin-left: -5px; }

/* ribbon tabs */
.tabs { display: flex; height: 22px; background: #cacaca; flex: none; padding-bottom: 1px; }
.tab { padding: 0 9px; white-space: nowrap; }
.tab.file { background: #0a7bb8; color: #fff; width: 47px; margin-right: 3px; }
.tab.current { background: #e8e8e8; color: #222; }

/* ribbon */
.ribbon { display: flex; height: 96px; flex: none; background: #eee; border-bottom: 1px solid #ccc; overflow: hidden; }
.panel { display: flex; flex-direction: column; flex: none; border-right: 1px solid #d9d9d9; }
.panel-body { display: flex; height: 76px; padding-top: 3px; }
.panel h2 { text-align: center; white-space: nowrap; line-height: 19px; }
.big { display: flex; flex-direction: column; align-items: center; height: 72px; line-height: 15px; position: relative; white-space: nowrap; }
.big span { margin-top: 5px; }
.lit { background: linear-gradient(#b4dcf8, #9fd0f6); border: 1px solid #2a7fc4; }
.lit span { margin-top: 4px; }
.corner { position: absolute; right: 0; bottom: 15px; }
.p-select { width: 66px; }
.p-select .big { width: 60px; margin-left: 3px; }
.p-select h2 svg { display: inline; margin-left: 3px; }
.p-params { width: 435px; }
.p-params h2 { padding-right: 32px; }
.mat { width: 66px; margin-left: 4px; }
.small-grid { display: grid; grid-template-columns: repeat(3, 24px); grid-template-rows: repeat(3, 24px); width: 72px; margin-left: 3px; }
.small-grid button, .triple button, .small-col button { display: grid; place-items: center; }
.rule { width: 1px; margin: 0 6px 0 5px; background: #d5d5d5; }
.extra { width: 114px; }
.small-col { display: grid; grid-template-columns: 24px 8px; grid-template-rows: repeat(3, 24px); align-items: center; margin-left: 64px; }
.p-options { width: 228px; }
.var { width: 72px; }
.options-col { display: flex; flex-direction: column; align-items: flex-start; padding-left: 3px; }
.options-col button { height: 25px; width: 24px; display: grid; place-items: center; }
select {
  appearance: none;
  border: 1px solid #adadad;
  border-radius: 0;
  background: #e2e2e2 url("data:image/svg+xml,%3Csvg xmlns='http://www.w3.org/2000/svg' width='10' height='6'%3E%3Cpath d='M1 .5l4 4 4-4' fill='none' stroke='%23444'/%3E%3C/svg%3E") right 3px center no-repeat;
  padding: 0 3px;
}
.model {
  width: 150px;
  height: 18px;
  margin-top: 2px;
  border-color: #d0d0d0;
  opacity: 1;
  color: #777;
  background: #f4f4f4 url("data:image/svg+xml,%3Csvg xmlns='http://www.w3.org/2000/svg' width='8' height='5'%3E%3Cpath d='M0 0h8L4 4.500z' fill='%23666'/%3E%3C/svg%3E") right 1px center no-repeat;
}
.p-project { width: 134px; }
.links { width: 70px; margin-left: 20px; }
.triple { display: grid; grid-auto-rows: 24px; width: 24px; align-content: start; }
.p-project .triple { margin-left: -2px; }
.p-phases { width: 50px; }
.p-phases .big, .p-visual .big { width: 100%; }
.p-sel { width: 102px; }
.p-info, .p-macro { width: 63px; }
.p-sel .triple, .p-info .triple, .p-macro .triple { margin: 0 auto; }
.p-macro .triple { padding-top: 12px; }
.p-visual { width: 90px; }
.p-visual h2 { text-align: left; padding-left: 5px; }
.options-bar { height: 28px; flex: none; background: #f0f0f0; border-bottom: 2px solid #c9c9c9; }

/* work area */
.work { flex: 1; min-height: 0; display: flex; border-bottom: 5px solid #cacaca; }
.pane-title { height: 20px; line-height: 22px; padding-left: 3px; white-space: nowrap; }
.props { width: 224px; flex: none; display: flex; flex-direction: column; overflow: hidden; }
.type { display: flex; height: 72px; border: 1px solid #dcdcdc; padding: 3px; gap: 4px; color: #555; align-items: center; flex: none; }
.type-pic { width: 66px; height: 66px; border: 1px solid #d0d0d0; display: grid; place-items: center; }
.instance { display: flex; align-items: center; height: 25px; gap: 7px; flex: none; padding-left: 1px; white-space: nowrap; }
.instance select { width: 154px; flex: none; height: 23px; color: #111; }
.edit-type { display: flex; align-items: center; gap: 4px; color: #111; }
.grid-scroll { flex: 1; min-height: 0; overflow: hidden; background: #fff; }
.grid { width: 100%; border-collapse: collapse; color: #111; white-space: nowrap; }
.grid tr { height: 18px; }
.grid td { padding: 0 0 0 9px; line-height: 17px; border-bottom: 1px dotted #888; }
.grid th { padding: 0 0 0 3px; line-height: 17px; font-weight: 400; text-align: left; background: #e0e0e0; border-bottom: 1px solid #e0e0e0; }
.grid .off { color: #8a8a8a; }
.help { height: 24px; line-height: 24px; padding-left: 3px; flex: none; white-space: nowrap; }

.view { flex: 1; min-width: 0; display: flex; flex-direction: column; }
.view-tabs { display: flex; height: 22px; background: #cacaca; border-bottom: 2px solid #fff; flex: none; }
.vt { display: flex; align-items: center; gap: 7px; color: #555; white-space: nowrap; }
.vt.first { width: 339px; justify-content: flex-end; padding-right: 22px; }
.vt.active { width: 129px; background: #fff; font-weight: 700; color: #333; padding: 0 6px; }
.vt.active .x { margin-left: auto; }
.vt.east { width: 126px; padding-left: 4px; }
.vt.cut { padding-left: 6px; }
.more { margin-left: auto; padding-right: 4px; }
.stage { flex: 1; display: flex; min-height: 0; }
.canvas { flex: 1; display: flex; flex-direction: column; position: relative; overflow: hidden; }
.sky { flex: 1; background: #c0c0c0; position: relative; }
.ground { height: 96px; background: #fff; border-top: 1px solid #000; }
.facade { position: absolute; left: 530px; top: 139px; }
.axis { position: absolute; left: 602px; top: 0; width: 1px; height: 14px; background: #000; }
.navbar { position: absolute; right: 1px; top: 0; }
.navbar b { position: absolute; left: 17px; top: 32px; font-size: 11px; font-weight: 500; color: #5a86b0; }
.vscroll { width: 17px; flex: none; display: flex; flex-direction: column; justify-content: space-between; align-items: center; padding: 5px 0; background: #f0f0f0; color: #555; }
.vscroll i { width: 16px; height: 17px; background: #c8c8c8; }
.stage .vscroll i { margin: 224px 0 auto; }
.up { transform: rotate(180deg); }
.right { transform: rotate(-90deg); }
.left { transform: rotate(90deg); }
.viewbar { height: 16px; flex: none; background: #f0f0f0; display: flex; align-items: center; gap: 10px; color: #333; }
.cam { margin: 0 auto 0 293px; }

.browser { width: 68px; flex: none; border-left: 4px solid #c4c4c4; background: #fff; overflow: hidden; display: flex; flex-direction: column; color: #111; }
.browser .pane-title { background: #f0f0f0; flex: none; color: #444; }
.tree { flex: 1; min-height: 0; overflow: hidden; white-space: nowrap; padding: 1px 0 0 6px; line-height: 18px; }
.tree li { min-height: 18px; }
.tree ul { margin-left: 24px; border-left: 1px dotted #999; }
.ex {
  display: inline-block;
  position: relative;
  width: 9px;
  height: 9px;
  border: 1px solid #8c9aa8;
  background: linear-gradient(#333, #333) center / 5px 1px no-repeat, #fff;
  margin-right: 13px;
}
.ex.plus { background: linear-gradient(#333, #333) center / 5px 1px no-repeat, linear-gradient(#333, #333) center / 1px 5px no-repeat, #fff; }
.ex::after { content: ""; position: absolute; left: 9px; top: 3px; width: 9px; border-top: 1px dotted #999; }
.ex.none { visibility: hidden; }
.tree ul .ex { margin-left: -5px; }
.ti { display: inline-block; vertical-align: -3px; margin: 0 7px 0 -8px; }
.tree .leaf { margin-left: 19px; }
.leaf li { background: repeating-linear-gradient(90deg, #aaa 0 1px, #0000 1px 2px) 0 50% / 100% 1px no-repeat; }
.tree .plain li { padding-left: 17px; background: repeating-linear-gradient(90deg, #aaa 0 1px, #0000 1px 2px) 0 50% / 14px 1px no-repeat; }
.hscroll { height: 16px; flex: none; background: #f0f0f0; display: flex; align-items: center; padding-left: 4px; gap: 3px; }
.hscroll i { flex: 1; height: 15px; background: #c8c8c8; }

.status { height: 22px; flex: none; display: flex; background: #cacaca; line-height: 22px; padding-left: 1px; }
.status span { width: 507px; color: #222; }
.worksets { width: 280px; background: #fff; height: 20px; }

/* activation watermark */
.watermark { position: absolute; left: 960px; right: 0; top: 630px; overflow: hidden; white-space: nowrap; color: rgba(120, 120, 120, .5); font: 15px/20px "Open Sans", "Noto Sans", sans-serif; }
.wm-title { font-size: 19px; line-height: 26px; padding-left: 51px; }
.wm-go { padding-left: 41px; }
.watermark .wm-where { margin-left: -43px; }
.wm-part { position: absolute; left: 150px; bottom: -2px; font: 18px/24px "Open Sans", "Noto Sans", sans-serif; color: rgba(130, 130, 130, .55); }

/* drop-down menu */
.menu { position: absolute; left: 223px; top: 123px; width: 286px; height: 170px; background: #fff; border: 1px solid #666; padding: 1px; }
.item { display: flex; align-items: center; gap: 4px; width: 100%; height: 40px; padding-left: 4px; white-space: nowrap; color: #333; }
.item.sep { border-top: 1px solid #999; height: 46px; }

/* dialogs */
.dialog { position: absolute; background: #f0f0f0; border: 1px solid #2079b4; font: 11px/14px "DejaVu Sans Condensed", "DejaVu Sans", sans-serif; color: #111; overflow: hidden; }
.dialog header { display: flex; justify-content: space-between; align-items: center; background: #fff; height: 30px; padding: 0 9px 0 8px; font: 12px/16px Roboto, sans-serif; }
.dialog fieldset { border: 1px solid #dcdcdc; min-width: 0; }
.dialog legend { padding: 0 4px; line-height: 14px; }
.dialog label { white-space: nowrap; }
input[type="radio"] { appearance: none; width: 13px; height: 13px; border: 1px solid #333; border-radius: 50%; background: #fff; margin: 0 3px 0 0; flex: none; }
input[type="radio"]:checked { background: radial-gradient(circle, #222 0 3px, #fff 4px); }
.dialog fieldset label, .radios label { display: flex; align-items: center; }
.search { display: flex; align-items: center; border: 1px solid #777; background: #fff; height: 20px; padding: 0 1px 0 2px; }
.search input { flex: 1; min-width: 0; width: 0; border: 0; background: none; padding: 0; font-weight: 600; outline: 0; }
.search input::placeholder { color: #4a8a80; }
.btn { width: 88px; height: 22px; background: #e1e1e1; border: 1px solid #adadad; text-align: center; }
.btn.ok { border: 2px solid #1c76bd; }
.foot { display: flex; align-items: center; gap: 8px; }
.txt { background: #fff; border: 1px solid #777; height: 20px; padding: 0 5px; }
.txt:disabled { border-color: #ccc; background: #f0f0f0; color: #888; }

.hatch-list { left: 65px; top: 290px; width: 444px; height: 439px; }
.hatch-list .dlg-body { padding: 10px 16px 0 10px; }
.kind { display: flex; height: 43px; }
.dialog .kind { padding: 6px 8px 0; }
.kind legend { margin-left: -4px; }
.kind label { width: 132px; height: 15px; }
.hatch-list .search { margin-top: 12px; }
.cols { display: grid; grid-template-columns: 185px 1fr; margin: 11px 0 5px; }
.list { display: flex; justify-content: space-between; height: 221px; overflow: hidden; background: #fff; border: 1px solid #888; border-right-color: #ddd; border-bottom-color: #ddd; }
.list table { border-collapse: collapse; width: 395px; }
.list tr { height: 28px; }
.list td { padding: 0 0 0 3px; height: 28px; }
.list td:first-child { width: 188px; }
.list .sel { background: #000; color: #fff; }
.list .vscroll i { margin: 4px 0 auto; }
.tools { display: flex; gap: 10px; margin-top: 14px; }
.hatch-list .foot { margin-top: 16px; white-space: nowrap; }
.hatch-list .foot a { margin-right: auto; }

.pattern { width: 244px; }
.basic { left: 532px; top: 208px; }
.custom { left: 789px; top: 207px; }
.pattern .dlg-body { padding: 11px 10px 14px 11px; }
.dialog .sample { height: 135px; padding: 4px 5px 0 8px; }
.sample legend { margin-left: -5px; }
.sample p { margin-top: 7px; display: flex; gap: 15px; }
.sample span, .units span { color: #777; }
.form { display: grid; grid-template-columns: 54px 1fr; margin-top: 8px; row-gap: 6px; line-height: 14px; }
.form > label { line-height: 22px; }
.box { height: 20px; border: 1px solid #777; background: #fff; padding: 0 4px; }
.box.focus { border-color: #2079b4; }
.box input { border: 0; padding: 0; width: 100%; height: 18px; background: none; outline: 0; display: block; }
.box mark { display: block; width: 106px; height: 16px; margin-top: 1px; background: #0f76d0; color: #fff; }
.box mark input { height: 16px; }
.radios { display: grid; row-gap: 9px; }
.radios label { height: 14px; }
.radios.tight { row-gap: 5px; }
.params { height: 166px; }
.dialog .params { margin-top: 7px; }
.params legend { margin-left: 3px; }
.indent { margin: 4px 5px 0 53px; }
.pair { display: flex; justify-content: space-between; margin-top: 6px; }
.indent.radios + .pair { margin-top: 6px; }
.dialog .pair label { height: 16px; }
.pair .txt { width: 65px; flex: none; }
.orient-label { display: block; margin-top: 13px; }
.orient { width: 215px; height: 22px; margin-top: 4px; display: block; }
.pattern .foot { margin: 9px 2px 0 0; justify-content: flex-end; }
.import-grid { display: grid; grid-template-columns: 129px 73px; gap: 6px 7px; margin: 2px 0 0 5px; align-items: start; }
.import-grid .search { grid-column: 1 / 3; width: 129px; }
.files { height: 61px; border: 1px solid #777; background: #fff; }
.browse { width: 73px; }
.units { display: grid; grid-template-columns: 111px 1fr; }
.dialog .units { margin: 7px 0 0 17px; }
.scale { display: grid; grid-template-columns: 108px 75px; margin: 12px 0 0 17px; }
.dialog .scale label { height: 14px; }

/* annotations */
.ring { position: absolute; border: 2px solid #0b4039; box-shadow: 2px 3px 4px rgba(0, 0, 0, .4), inset 1px 2px 3px rgba(0, 0, 0, .25); }
.ring-tab { left: 629px; top: 28px; width: 88px; height: 22px; }
.ring-item { left: 223px; top: 122px; width: 287px; height: 39px; }
.guides { position: absolute; left: 0; top: 0; }
.callout { position: absolute; left: 41px; top: 579px; width: 201px; height: 62px; background: #023b3a; color: #e4f3f1; font: 21px/25px Roboto, sans-serif; padding: 6px 10px; box-shadow: 2px 2px 4px rgba(0, 0, 0, .5); white-space: nowrap; }
.callout svg { position: absolute; left: 39px; top: 61px; }
```
